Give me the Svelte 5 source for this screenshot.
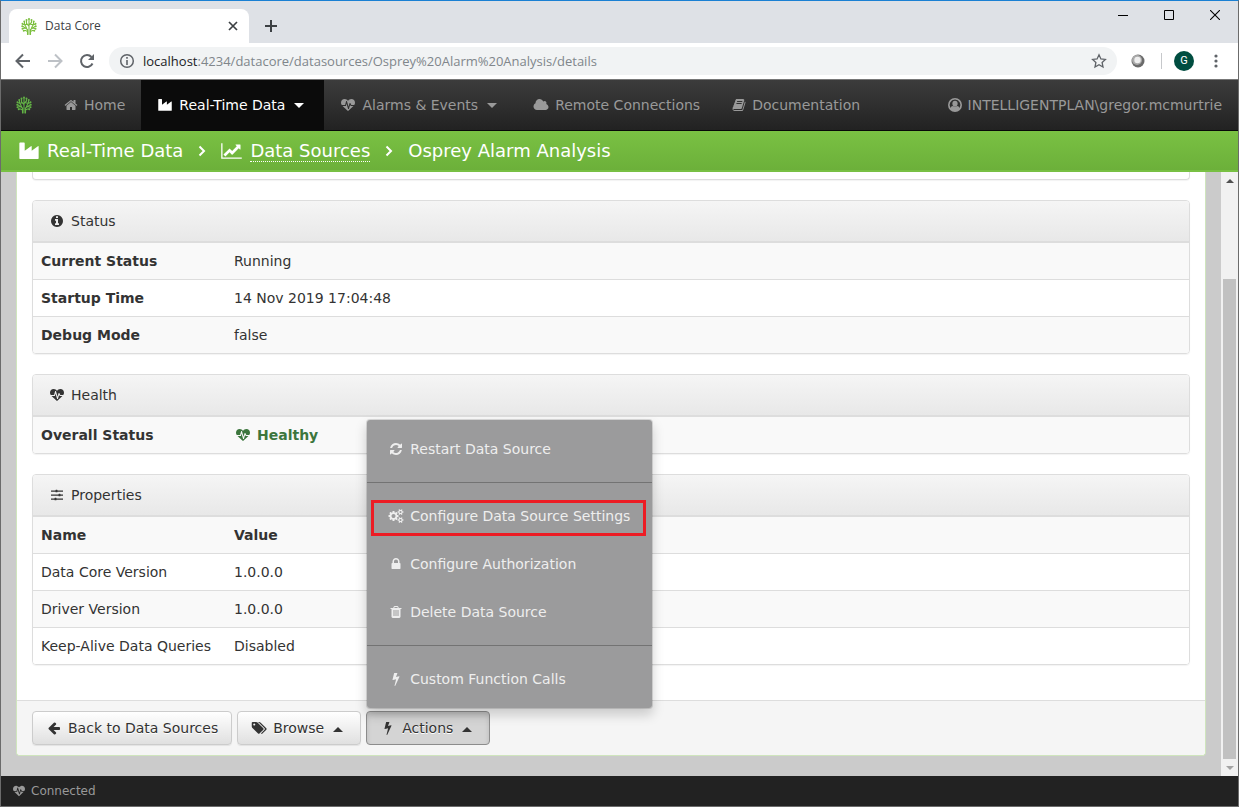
<script>
  const icons = {
    home: ['0 0 1792 1792', 'M1472 992v480q0 26-19 45t-45 19h-384v-384h-256v384h-384q-26 0-45-19t-19-45v-480q0-1 .5-3t.5-3l575-474 575 474q1 2 1 6zm223-69l-62 74q-8 9-21 11h-3q-13 0-21-7l-692-577-692 577q-12 8-24 7-13-2-21-11l-62-74q-8-10-7-23.5t11-21.5l719-599q32-26 76-26t76 26l244 204v-195q0-14 9-23t23-9h192q14 0 23 9t9 23v408l219 182q10 8 11 21.5t-7 23.5z'],
    heart: ['0 0 1792 1792', 'M1280 1024h305q-5 6-10 10.5t-9 7.5l-3 4-623 600q-18 18-44 18t-44-18l-624-602q-5-2-21-20h369q22 0 39.5-13.5t22.5-34.5l70-281 190 667q6 20 23 33t39 13q21 0 38-13t23-33l146-485 56 112q18 35 57 35zm512-428q0 145-103 300h-369l-111-221q-8-17-25.5-27t-36.5-8q-45 5-56 46l-129 430-196-686q-6-20-23.5-33t-39.5-13-39 13.5-22 34.5l-116 464h-423q-103-155-103-300 0-220 127-344t351-124q62 0 126.5 21.5t120 58 95.5 68.5 76 68q36-36 76-68t95.5-68.5 120-58 126.5-21.5q224 0 351 124t127 344z'],
    refresh: ['0 0 1792 1792', 'M1639 1056q0 5-1 7-64 268-268 434.5t-478 166.5q-146 0-282.5-55t-243.5-157l-129 129q-19 19-45 19t-45-19-19-45v-448q0-26 19-45t45-19h448q26 0 45 19t19 45-19 45l-137 137q71 66 161 102t187 36q134 0 250-65t186-179q11-17 53-117 8-23 30-23h192q13 0 22.5 9.5t9.5 22.5zm25-800v448q0 26-19 45t-45 19h-448q-26 0-45-19t-19-45 19-45l138-138q-148-137-349-137-134 0-250 65t-186 179q-11 17-53 117-8 23-30 23h-199q-13 0-22.5-9.5t-9.5-22.5v-7q65-268 270-434.5t480-166.5q146 0 284 55.5t245 156.5l130-129q19-19 45-19t45 19 19 45z'],
    cogs: ['0 0 1920 1792', 'M896 896q0-106-75-181t-181-75-181 75-75 181 75 181 181 75 181-75 75-181zm768 512q0-52-38-90t-90-38-90 38-38 90q0 53 37.5 90.5t90.5 37.5 90.5-37.5 37.5-90.5zm0-1024q0-52-38-90t-90-38-90 38-38 90q0 53 37.5 90.5t90.5 37.5 90.5-37.5 37.5-90.5zm-384 421v185q0 10-7 19.5t-16 10.5l-155 24q-11 35-32 76 34 48 90 115 7 11 7 20 0 12-7 19-23 30-82.5 89.5t-78.5 59.5q-11 0-21-7l-115-90q-37 19-77 31-11 108-23 155-7 24-30 24h-186q-11 0-20-7.5t-10-17.5l-23-153q-34-10-75-31l-118 89q-7 7-20 7-11 0-21-8-144-133-144-160 0-9 7-19 10-14 41-53t47-61q-23-44-35-82l-152-24q-10-1-17-9.5t-7-19.5v-185q0-10 7-19.5t16-10.5l155-24q11-35 32-76-34-48-90-115-7-11-7-20 0-12 7-20 22-30 82-89t79-59q11 0 21 7l115 90q34-18 77-32 11-108 23-154 7-24 30-24h186q11 0 20 7.5t10 17.5l23 153q34 10 75 31l118-89q8-7 20-7 11 0 21 8 144 133 144 160 0 8-7 19-12 16-42 54t-45 60q23 48 34 82l152 23q10 2 17 10.5t7 19.5zm640 533v140q0 16-149 31-12 27-30 52 51 113 51 138 0 4-4 7-122 71-124 71-8 0-46-47t-52-68q-20 2-30 2t-30-2q-14 21-52 68t-46 47q-2 0-124-71-4-3-4-7 0-25 51-138-18-25-30-52-149-15-149-31v-140q0-16 149-31 13-29 30-52-51-113-51-138 0-4 4-7 4-2 35-20t59-34 30-16q8 0 46 46.5t52 67.5q20-2 30-2t30 2q51-71 92-112l6-2q4 0 124 70 4 3 4 7 0 25-51 138 17 23 30 52 149 15 149 31zm0-1024v140q0 16-149 31-12 27-30 52 51 113 51 138 0 4-4 7-122 71-124 71-8 0-46-47t-52-68q-20 2-30 2t-30-2q-14 21-52 68t-46 47q-2 0-124-71-4-3-4-7 0-25 51-138-18-25-30-52-149-15-149-31v-140q0-16 149-31 13-29 30-52-51-113-51-138 0-4 4-7 4-2 35-20t59-34 30-16q8 0 46 46.5t52 67.5q20-2 30-2t30 2q51-71 92-112l6-2q4 0 124 70 4 3 4 7 0 25-51 138 17 23 30 52 149 15 149 31z'],
    lock: ['0 0 1792 1792', 'M640 768h512v-192q0-106-75-181t-181-75-181 75-75 181v192zm832 96v576q0 40-28 68t-68 28h-960q-40 0-68-28t-28-68v-576q0-40 28-68t68-28h32v-192q0-184 132-316t316-132 316 132 132 316v192h32q40 0 68 28t28 68z'],
    trash: ['0 0 1792 1792', 'M704 1376v-704q0-14-9-23t-23-9h-64q-14 0-23 9t-9 23v704q0 14 9 23t23 9h64q14 0 23-9t9-23zm256 0v-704q0-14-9-23t-23-9h-64q-14 0-23 9t-9 23v704q0 14 9 23t23 9h64q14 0 23-9t9-23zm256 0v-704q0-14-9-23t-23-9h-64q-14 0-23 9t-9 23v704q0 14 9 23t23 9h64q14 0 23-9t9-23zm-544-992h448l-48-117q-7-9-17-11h-317q-10 2-17 11zm928 32v64q0 14-9 23t-23 9h-96v948q0 83-47 143.5t-113 60.5h-832q-66 0-113-58.5t-47-141.5v-952h-96q-14 0-23-9t-9-23v-64q0-14 9-23t23-9h309l70-167q15-37 54-63t79-26h320q40 0 79 26t54 63l70 167h309q14 0 23 9t9 23z'],
    bolt: ['0 0 1792 1792', 'M1333 566q18 20 7 44l-540 1157q-13 25-42 25-4 0-14-2-17-5-25.5-19t-4.5-30l197-808-406 101q-4 1-12 1-18 0-31-11-18-15-13-39l201-825q4-14 16-23t28-9h328q19 0 32 12.5t13 29.5q0 8-5 18l-171 463 396-98q8-2 12-2 19 0 34 15z'],
    cloud: ['64 0 1920 1792', 'M1984 1152q0 159-112.5 271.5t-271.5 112.5h-1088q-185 0-316.5-131.5t-131.5-316.5q0-132 71-241.5t187-163.5q-2-28-2-43 0-212 150-362t362-150q158 0 286.5 88t187.5 230q70-62 166-62 106 0 181 75t75 181q0 75-41 138 129 30 213 134.5t84 239.5z'],
    book: ['0 0 1792 1792', 'M1703 478q40 57 18 129l-275 906q-19 64-76.5 107.5t-122.5 43.5h-923q-77 0-148.5-53.5t-99.5-131.5q-24-67-2-127 0-4 3-27t4-37q1-8-3-21.5t-3-19.5q2-11 8-21t16.5-23.5 16.5-23.5q23-38 45-91.5t30-91.5q3-10 .5-30t-.5-28q3-11 17-28t17-23q21-36 42-92t25-90q1-9-2.5-32t.5-28q4-13 22-30.5t22-22.5q19-26 42.5-84.5t27.5-96.5q1-8-3-25.5t-2-26.5q2-8 9-18t18-23 17-21q8-12 16.5-30.5t15-35 16-36 19.5-32 26.5-23.5 36-11.5 47.5 5.5l-1 3q38-9 51-9h761q74 0 114 56t18 130l-274 906q-36 119-71.5 153.5t-128.5 34.5h-869q-27 0-38 15-11 16-1 43 24 70 144 70h923q29 0 56-15.5t35-41.5l300-987q7-22 5-57 38 15 59 43zm-1064 2q-4 13 2 22.5t20 9.5h608q13 0 25.5-9.5t16.5-22.5l21-64q4-13-2-22.5t-20-9.5h-608q-13 0-25.5 9.5t-16.5 22.5zm-83 256q-4 13 2 22.5t20 9.5h608q13 0 25.5-9.5t16.5-22.5l21-64q4-13-2-22.5t-20-9.5h-608q-13 0-25.5 9.5t-16.5 22.5z'],
    industry: ['0 0 1792 1792', 'M448 128q26 0 45 19t19 45v686l557-416q19-14 43-10t24 34v392l557-416q19-14 43-10t24 34v1070q0 64-64 64H96q-64 0-64-64V192q0-26 19-45t45-19z'],
    chart: ['0 0 2048 1792', 'M2048 1536v128h-2048v-1536h128v1408h1920zm-128-1248v435q0 21-19.5 29.5t-35.5-7.5l-121-121-633 633q-10 10-23 10t-23-10l-233-233-416 416-192-192 585-585q10-10 23-10t23 10l233 233 464-464-121-121q-16-16-7.5-35.5t29.5-19.5h435q14 0 23 9t9 23z'],
    back: ['0 0 1792 1792', 'M1664 896v128q0 53-32.5 90.5t-84.5 37.5h-704l293 294q38 36 38 90t-38 90l-75 76q-37 37-90 37-52 0-91-37l-651-652q-37-37-37-90 0-52 37-91l651-650q38-38 91-38 52 0 90 38l75 74q38 38 38 91t-38 91l-293 293h704q52 0 84.5 37.5t32.5 90.5z'],
    info: ['0 0 1792 1792', 'M1152 1376v-160q0-14-9-23t-23-9h-96v-512q0-14-9-23t-23-9h-320q-14 0-23 9t-9 23v160q0 14 9 23t23 9h96v320h-96q-14 0-23 9t-9 23v160q0 14 9 23t23 9h448q14 0 23-9t9-23zm-128-896v-160q0-14-9-23t-23-9h-192q-14 0-23 9t-9 23v160q0 14 9 23t23 9h192q14 0 23-9t9-23zm640 416q0 209-103 385.5t-279.5 279.5-385.5 103-385.5-103-279.5-279.5-103-385.5 103-385.5 279.5-279.5 385.5-103 385.5 103 279.5 279.5 103 385.5z'],
    tags: ['64 0 1984 1792', 'M576 448q0-53-37.5-90.5t-90.5-37.5-90.5 37.5-37.5 90.5 37.5 90.5 90.5 37.5 90.5-37.5 37.5-90.5zm1067 576q0 53-37 90l-491 492q-39 37-91 37-53 0-90-37l-715-716q-38-37-64.5-101t-26.5-117v-416q0-52 38-90t90-38h416q53 0 117 26.5t102 64.5l715 714q37 39 37 91zm384 0q0 53-37 90l-491 492q-39 37-91 37-36 0-59-14t-53-45l470-470q37-37 37-90 0-52-37-91l-715-714q-38-38-102-64.5t-117-26.5h224q53 0 117 26.5t102 64.5l715 714q37 39 37 91z'],
    sliders: ['0 0 1792 1792', 'M128 304h576v160H128zM960 304h704v160H960zM768 224h128q64 0 64 64v192q0 64-64 64H768q-64 0-64-64V288q0-64 64-64zM128 816h960v160H128zM1344 816h320v160h-320zM1152 736h128q64 0 64 64v192q0 64-64 64h-128q-64 0-64-64V800q0-64 64-64zM128 1328h448v160H128zM832 1328h832v160H832zM640 1248h128q64 0 64 64v192q0 64-64 64H640q-64 0-64-64v-192q0-64 64-64z'],
    user: ['0 0 1792 1792', 'M896 0a896 896 0 1 1 0 1792a896 896 0 0 1 0-1792zM896 200a696 696 0 0 0-580 1080q70-240 310-250 120 100 270 100t270-100q240 10 310 250A696 696 0 0 0 896 200zM896 340a340 370 0 1 1 0 740a340 370 0 0 1 0-740z']
  };
  const status = [['Current Status', 'Running'], ['Startup Time', '14 Nov 2019 17:04:48'], ['Debug Mode', 'false']];
  const properties = [['Data Core Version', '1.0.0.0'], ['Driver Version', '1.0.0.0'], ['Keep-Alive Data Queries', 'Disabled']];
  let open = $state(true);
</script>

{#snippet icon(name, cls = '')}
  <svg class="icon {cls}" viewBox={icons[name][0]} aria-hidden="true"><path fill="currentColor" fill-rule={name === 'user' ? 'evenodd' : 'nonzero'} d={icons[name][1]} /></svg>
{/snippet}

{#snippet tree()}
  <svg class="tree" viewBox="0 0 32 34" aria-hidden="true" fill="none" stroke="currentColor" stroke-width="2.2" stroke-linecap="round" stroke-linejoin="round">
    <path d="M13 33V23L4 17M19 33V23l9-6M16 33V3M16 16l-5-5V5M16 14l5-5V5M13 27l-4-2H5M19 27l4-2h4M10 20l-6 1M22 20l6 1M11 20l-4-8V8M21 20l4-8V8M8 14l-5-2M24 14l5-2M12 13H9M20 13h3" />
    <g fill="currentColor" stroke="none">
      <circle cx="16" cy="2" r="2" /><circle cx="11" cy="4" r="2" /><circle cx="21" cy="4" r="2" /><circle cx="6.500" cy="7" r="2" /><circle cx="25.500" cy="7" r="2" />
      <circle cx="3" cy="11.500" r="2" /><circle cx="29" cy="11.500" r="2" /><circle cx="2.500" cy="16.500" r="2" /><circle cx="29.500" cy="16.500" r="2" /><circle cx="3" cy="21.500" r="2" /><circle cx="29" cy="21.500" r="2" /><circle cx="5.500" cy="25.500" r="2" /><circle cx="26.500" cy="25.500" r="2" />
    </g>
  </svg>
{/snippet}

<div class="window">
  <div class="tabstrip">
    <div class="tab">
      {@render tree()}
      <span>Data Core</span>
      <button class="plain tab-close" aria-label="Close tab"><svg width="10" height="10" viewBox="0 0 10 10"><path d="M1 1l8 8M9 1l-8 8" stroke="#3c4043" stroke-width="1.700" /></svg></button>
    </div>
    <button class="plain new-tab" aria-label="New tab"><svg width="12" height="12" viewBox="0 0 12 12"><path d="M6 0v12M0 6h12" stroke="#3c4043" stroke-width="2" /></svg></button>
    <div class="controls">
      <button class="plain" aria-label="Minimize"><svg width="10" height="10" viewBox="0 0 10 10"><path d="M0 5.500h10" stroke="#000" /></svg></button>
      <button class="plain" aria-label="Maximize"><svg width="10" height="10" viewBox="0 0 10 10"><path d="M.5.500h9v9h-9z" fill="none" stroke="#000" /></svg></button>
      <button class="plain" aria-label="Close"><svg width="10" height="10" viewBox="0 0 10 10"><path d="M0 0l10 10M10 0L0 10" stroke="#000" stroke-width="1.100" /></svg></button>
    </div>
  </div>

  <div class="toolbar">
    <button class="plain" aria-label="Back"><svg width="16" height="16" viewBox="0 0 16 16" fill="none" stroke="#5f6368" stroke-width="2"><path d="M15 8H2M8 1.500L1.500 8 8 14.500" /></svg></button>
    <button class="plain" aria-label="Forward"><svg width="16" height="16" viewBox="0 0 16 16" fill="none" stroke="#bdc1c6" stroke-width="2"><path d="M1 8h13M8 1.500L14.500 8 8 14.500" /></svg></button>
    <button class="plain" aria-label="Reload"><svg width="16" height="16" viewBox="0 0 16 16"><path d="M13.500 10.500A6 6 0 1 1 12.500 4" fill="none" stroke="#5f6368" stroke-width="2" /><path d="M15 1v6H9z" fill="#5f6368" /></svg></button>
    <div class="omnibox">
      <svg width="16" height="16" viewBox="0 0 16 16"><circle cx="8" cy="8" r="6.300" fill="none" stroke="#5f6368" stroke-width="1.500" /><path d="M8 7v5M8 4v1.800" stroke="#5f6368" stroke-width="1.600" /></svg>
      <label for="address">localhost</label>
      <input id="address" value=":4234/datacore/datasources/Osprey%20Alarm%20Analysis/details" />
      <button class="plain" aria-label="Bookmark"><svg width="16" height="16" viewBox="0 0 16 16"><path d="M8 1.800l1.900 4.100 4.500.5-3.300 3.100.9 4.500L8 11.700 4 14l.9-4.500L1.600 6.400l4.500-.5z" fill="none" stroke="#5f6368" stroke-width="1.300" /></svg></button>
    </div>
    <button class="plain" aria-label="Extension"><svg width="14" height="14" viewBox="0 0 14 14"><circle cx="7" cy="7" r="6.500" fill="#6a6a6a" /><circle cx="6" cy="6" r="5" fill="#aaa" /><circle cx="6.500" cy="6" r="3.200" fill="#eee" /></svg></button>
    <span class="divider"></span>
    <button class="plain avatar" aria-label="Profile">G</button>
    <button class="plain" aria-label="Browser menu"><svg width="4" height="14" viewBox="0 0 4 14" fill="#5f6368"><circle cx="2" cy="2" r="1.600" /><circle cx="2" cy="7" r="1.600" /><circle cx="2" cy="12" r="1.600" /></svg></button>
  </div>

  <nav class="navbar">
    <a class="brand" href="#top" aria-label="Data Core home">{@render tree()}</a>
    <a href="#home">{@render icon('home')}Home</a>
    <a class="active" href="#realtime">{@render icon('industry', 'wide')}Real-Time Data<i class="caret"></i></a>
    <a href="#alarms">{@render icon('heart', 'wide')}Alarms &amp; Events<i class="caret"></i></a>
    <a href="#remote">{@render icon('cloud', 'wide')}Remote Connections</a>
    <a href="#docs">{@render icon('book')}Documentation</a>
    <a class="account" href="#account">{@render icon('user')}INTELLIGENTPLAN\gregor.mcmurtrie</a>
  </nav>

  <header class="crumbs">
    {@render icon('industry', 'large')}
    <span>Real-Time Data</span>
    <svg class="chevron" viewBox="0 0 8 12"><path d="M1.500 1.500L6 6l-4.500 4.500" fill="none" stroke="#fff" stroke-width="2" /></svg>
    {@render icon('chart', 'xlarge')}
    <a href="#sources">Data Sources</a>
    <svg class="chevron" viewBox="0 0 8 12"><path d="M1.500 1.500L6 6l-4.500 4.500" fill="none" stroke="#fff" stroke-width="2" /></svg>
    <span>Osprey Alarm Analysis</span>
  </header>

  <div class="viewport">
    <main>
      <div class="card">
        <div class="card-body">
          <div class="panel-tail"></div>

          <section class="panel">
            <h2>{@render icon('info', 'fw')}Status</h2>
            <table><tbody>
              {#each status as [name, value]}
                <tr><th scope="row">{name}</th><td>{value}</td></tr>
              {/each}
            </tbody></table>
          </section>

          <section class="panel">
            <h2>{@render icon('heart', 'fw')}Health</h2>
            <table><tbody>
              <tr><th scope="row">Overall Status</th><td><strong class="healthy">{@render icon('heart', 'fw')}Healthy</strong></td></tr>
            </tbody></table>
          </section>

          <section class="panel">
            <h2>{@render icon('sliders', 'fw')}Properties</h2>
            <table>
              <thead><tr><th scope="col">Name</th><th scope="col">Value</th></tr></thead>
              <tbody class="even">
                {#each properties as [name, value]}
                  <tr><td>{name}</td><td>{value}</td></tr>
                {/each}
              </tbody>
            </table>
          </section>
        </div>

        <footer class="actions">
          <button class="btn">{@render icon('back', 'fw')}Back to Data Sources</button>
          <button class="btn">{@render icon('tags', 'wide')}Browse<i class="caret up"></i></button>
          <div class="dropup">
            <button class="btn" class:pressed={open} aria-expanded={open} onclick={() => (open = !open)}>{@render icon('bolt', 'fw')}Actions<i class="caret up"></i></button>
            {#if open}
              <div class="menu">
                <a href="#restart">{@render icon('refresh', 'fw')}Restart Data Source</a>
                <hr />
                <a class="marked" href="#settings">{@render icon('cogs', 'fw')}Configure Data Source Settings</a>
                <a href="#authorization">{@render icon('lock', 'fw')}Configure Authorization</a>
                <a href="#delete">{@render icon('trash', 'fw')}Delete Data Source</a>
                <hr />
                <a href="#functions">{@render icon('bolt', 'fw')}Custom Function Calls</a>
              </div>
            {/if}
          </div>
        </footer>
      </div>
    </main>
    <div class="scrollbar" aria-hidden="true">
      <span class="step"><i class="caret up"></i></span>
      <span class="before"></span>
      <span class="thumb"></span>
      <span class="step end"><i class="caret"></i></span>
    </div>
  </div>

  <footer class="statusbar">{@render icon('heart', 'small')}Connected</footer>
</div>

<style>
  :global(body) { margin: 0; }
  * { box-sizing: border-box; }
  .window {
    display: flex; flex-direction: column; height: 100vh; overflow: hidden;
    border: 1px solid #6b6b6b; border-top-color: #1a80d3;
    font: 14px/20px Verdana, "DejaVu Sans", sans-serif; color: #333;
  }
  a { color: inherit; text-decoration: none; }
  .plain { display: flex; align-items: center; justify-content: center; padding: 0; border: 0; background: none; }
  .icon { display: block; flex: none; width: 14px; height: 14px; margin-right: 6px; }
  .icon.wide { width: 16px; height: 14px; }
  .icon.fw { width: 18px; margin-right: 5px; }
  .icon.large { width: 20px; height: 20px; margin-right: 8px; }
  .icon.xlarge { width: 21px; height: 18px; margin-right: 8px; }
  .icon.small { width: 12px; height: 12px; }
  .caret { flex: none; width: 0; height: 0; border: 5px solid transparent; border-top-color: currentColor; border-bottom: 0; }
  .caret.up { border-top: 0; border-bottom: 5px solid currentColor; }

  .tabstrip { flex: none; display: flex; height: 42px; background: #dee1e6; font: 12px/16px "Open Sans", sans-serif; color: #3c4043; }
  .tab { display: flex; align-items: center; width: 240px; margin: 8px 0 0 8px; padding: 0 10px 0 12px; border-radius: 8px 8px 0 0; background: #fff; }
  .tree { flex: none; width: 16px; height: 17px; color: #7cbf3f; }
  .tab .tree { margin-right: 8px; }
  .tab-close { width: 12px; height: 12px; margin-left: auto; }
  .new-tab { width: 28px; height: 28px; margin: 11px 0 0 8px; }
  .controls { display: flex; height: 28px; margin-left: auto; }
  .controls .plain { width: 46px; }

  .toolbar { flex: none; display: flex; align-items: center; gap: 16px; height: 36px; padding: 0 20px 0 14px; background: #fff; }
  .omnibox { flex: 1; display: flex; align-items: center; height: 28px; margin: 0 -2px; padding: 0 10px; border-radius: 14px; background: #f1f3f4; font: 13px/20px "Open Sans", sans-serif; }
  .omnibox label { margin-left: 8px; color: #202124; }
  .omnibox input { flex: 1; min-width: 0; padding: 0; border: 0; background: none; font: inherit; color: #80868b; }
  .divider { width: 1px; height: 16px; background: #c6c8cb; }
  .avatar { width: 20px; height: 20px; border-radius: 50%; margin: 0 4px 0 -4px; background: #004d40; color: #fff; font: 11px/20px Roboto, sans-serif; }

  .navbar { flex: none; display: flex; height: 52px; border-top: 1px solid #777; border-bottom: 1px solid #080808; background: linear-gradient(#3c3c3c, #222); color: #999; }
  .navbar a { display: flex; align-items: center; padding: 0 16px; white-space: nowrap; }
  .navbar .brand { width: 47px; padding: 0 0 0 15px; }
  .navbar .brand .tree { height: 18px; color: #62b245; }
  .navbar .active { background: #0b0b0b; color: #fff; }
  .navbar .caret { margin: 0 4px 0 9px; }
  .navbar .account { margin-left: auto; }

  .crumbs { flex: none; display: flex; align-items: center; height: 41px; padding: 0 18px; border-bottom: 2px solid #78c043; background: linear-gradient(#7ac143, #6cb03a); color: #fff; font-size: 18px; line-height: 20px; white-space: nowrap; }
  .crumbs a { margin-bottom: -1px; border-bottom: 1px dotted #fff; }
  .chevron { flex: none; width: 8px; height: 12px; margin: 0 15px; }

  .viewport { flex: 1; min-height: 0; display: flex; background: #cbcbcb; }
  main { flex: 1; min-width: 0; padding: 0 15px 20px; }
  .card { border: 1px solid #cfe5bd; border-top: 0; border-radius: 0 0 4px 4px; background: #fff; }
  .card-body { padding: 0 15px 35px; }
  .panel-tail { height: 8px; margin-bottom: 20px; border: 1px solid #ddd; border-top: 0; border-radius: 0 0 4px 4px; box-shadow: 0 1px 1px #0000000d; }
  .panel { margin-bottom: 20px; border: 1px solid #ddd; border-radius: 4px; box-shadow: 0 1px 1px #0000000d; overflow: hidden; }
  .panel:last-child { margin-bottom: 0; }
  h2 { display: flex; align-items: center; height: 42px; margin: 0; padding: 0 15px; border-bottom: 2px solid #ddd; background: linear-gradient(#f5f5f5, #e8e8e8); font-size: 14px; font-weight: 400; }
  table { width: 100%; border-collapse: separate; border-spacing: 0; }
  th, td { height: 36px; padding: 0 8px; text-align: left; }
  tr + tr > *, .even td { height: 37px; border-top: 1px solid #ddd; }
  tbody tr:nth-child(odd), thead tr { background: #f9f9f9; }
  .even tr:nth-child(odd) { background: #fff; }
  .even tr:nth-child(even) { background: #f9f9f9; }
  tr > :first-child { width: 193px; white-space: nowrap; }
  .healthy { display: flex; align-items: center; color: #3c763d; }

  .actions { display: flex; gap: 5px; height: 55px; padding: 10px 15px; border-top: 1px solid #ddd; border-radius: 0 0 4px 4px; background: #f5f5f5; }
  .btn { display: flex; align-items: center; height: 34px; padding: 0 13px 0 12px; border: 1px solid #ccc; border-radius: 4px; background: linear-gradient(#fff, #e0e0e0); box-shadow: 0 1px 1px #00000013; color: #333; font: inherit; text-shadow: 0 1px 0 #fff; white-space: nowrap; }
  .btn .caret { margin: 2px 4px 0 9px; }
  .btn .wide { margin: 0 6px 0 1px; }
  .btn.pressed { border-color: #8c8c8c; background: #d4d4d4; box-shadow: inset 0 3px 5px #00000020; }
  .dropup { position: relative; }
  .menu { position: absolute; left: 0; bottom: 36px; padding: 5px 0; border: 1px solid #0000001f; border-radius: 4px; background: #9b9b9c; background-clip: padding-box; box-shadow: 0 6px 12px #0000002d; color: #eee; white-space: nowrap; }
  .menu a { position: relative; display: flex; align-items: center; height: 48px; padding: 0 22px 0 20px; }
  .menu hr { height: 1px; margin: 9px 0; border: 0; background: #737373; }
  .marked::after { content: ""; position: absolute; inset: 8px 6px 4px 4px; border: 3px solid #ed1c24; }

  .scrollbar { flex: none; display: flex; flex-direction: column; width: 17px; background: #f1f1f1; color: #505050; }
  .scrollbar .step { display: flex; align-items: center; justify-content: center; height: 17px; }
  .scrollbar .end { color: #a3a3a3; }
  .scrollbar .caret { border-left-width: 4px; border-right-width: 4px; border-top-width: 4px; }
  .scrollbar .caret.up { border-top-width: 0; border-bottom-width: 4px; }
  .before { flex: 90; }
  .thumb { flex: 480; margin: 0 2px; background: #c1c1c1; }

  .statusbar { flex: none; display: flex; align-items: center; height: 30px; padding: 0 12px; background: #222; color: #999; font-size: 12px; }
</style>
